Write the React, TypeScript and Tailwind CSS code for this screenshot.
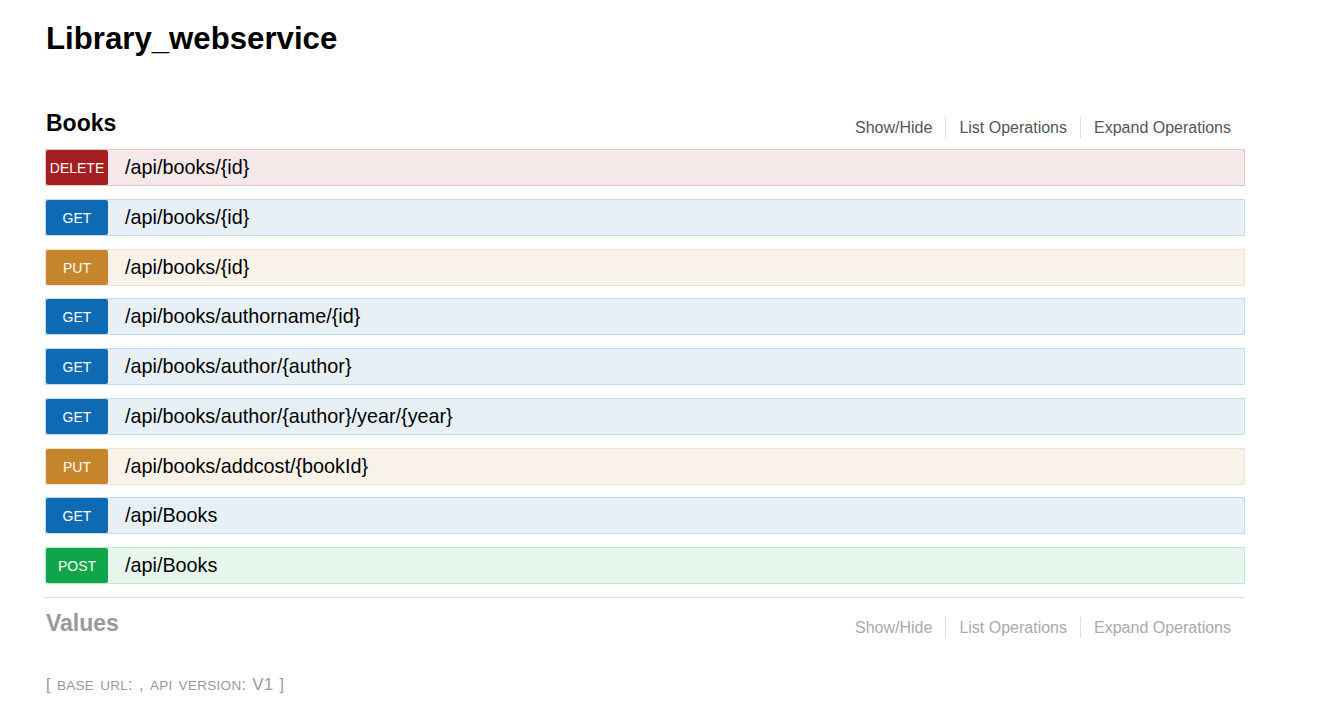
import React from 'react';

type Method = 'delete' | 'get' | 'put' | 'post';

const methodStyles: Record<Method, { row: string; badge: string }> = {
  delete: { row: 'bg-[#f5e8e8] border-[#e8c6c7]', badge: 'bg-[#a41e22]' },
  get: { row: 'bg-[#e7f0f7] border-[#c3d9ec]', badge: 'bg-[#0f6ab4]' },
  put: { row: 'bg-[#f9f2e9] border-[#f0e2d7]', badge: 'bg-[#c5862b]' },
  post: { row: 'bg-[#e7f6ec] border-[#c3e8d1]', badge: 'bg-[#10a54a]' },
};

const operations: { method: Method; path: string }[] = [
  { method: 'delete', path: '/api/books/{id}' },
  { method: 'get', path: '/api/books/{id}' },
  { method: 'put', path: '/api/books/{id}' },
  { method: 'get', path: '/api/books/authorname/{id}' },
  { method: 'get', path: '/api/books/author/{author}' },
  { method: 'get', path: '/api/books/author/{author}/year/{year}' },
  { method: 'put', path: '/api/books/addcost/{bookId}' },
  { method: 'get', path: '/api/Books' },
  { method: 'post', path: '/api/Books' },
];

function ResourceHeader({ title, muted }: { title: string; muted?: boolean }) {
  return (
    <div className="flex h-[40px] items-start justify-between">
      <h2 className={`ml-px text-[23px] font-bold leading-[28px] ${muted ? 'text-[#999]' : 'text-black'}`}>{title}</h2>
      <ul className={`mt-[8px] flex text-[16px] leading-[21px] ${muted ? 'text-[#aaa]' : 'text-[#555]'}`}>
        <li className="px-[13px]">Show/Hide</li>
        <li className="border-l border-[#ddd] px-[13px]">List Operations</li>
        <li className="border-l border-[#ddd] pl-[13px] pr-[14px]">Expand Operations</li>
      </ul>
    </div>
  );
}

function OperationRow({ method, path }: { method: Method; path: string }) {
  const s = methodStyles[method];
  return (
    <div className={`flex h-[37px] items-center border ${s.row}`}>
      <span
        className={`flex h-[35px] w-[62px] items-center justify-center rounded-[2px] pt-[2px] text-[14px] uppercase text-white ${s.badge}`}
      >
        {method}
      </span>
      <span className="ml-[17px] pt-px text-[19.8px] text-black">{path}</span>
    </div>
  );
}

export default function App() {
  return (
    <div className="min-h-screen bg-white font-['Liberation_Sans',Arial,sans-serif]">
      <div className="ml-[45px] w-[1200px] pt-[21px]">
        <h1 className="ml-px text-[31.2px] font-bold leading-[36px] text-black">Library_webservice</h1>

        {/* Books */}
        <section className="mt-[52px]">
          <ResourceHeader title="Books" />
          <div className="flex flex-col gap-[12.75px]">
            {operations.map((op, i) => (
              <OperationRow key={i} method={op.method} path={op.path} />
            ))}
          </div>
        </section>

        {/* Values */}
        <section className="mt-[13px] border-t border-[#ddd] pt-[11px]">
          <ResourceHeader title="Values" muted />
        </section>

        {/* Footer */}
        <div className="ml-px mt-[26px] text-[16px] leading-[20px] text-[#999] [word-spacing:2px]">
          [ <span className="text-[13.5px] uppercase tracking-[0.3px]">base url</span>: ,{' '}
          <span className="text-[13.5px] uppercase tracking-[0.3px]">api version</span>:{' '}
          <span className="text-[17px] uppercase">v1</span> ]
        </div>
      </div>
    </div>
  );
}
